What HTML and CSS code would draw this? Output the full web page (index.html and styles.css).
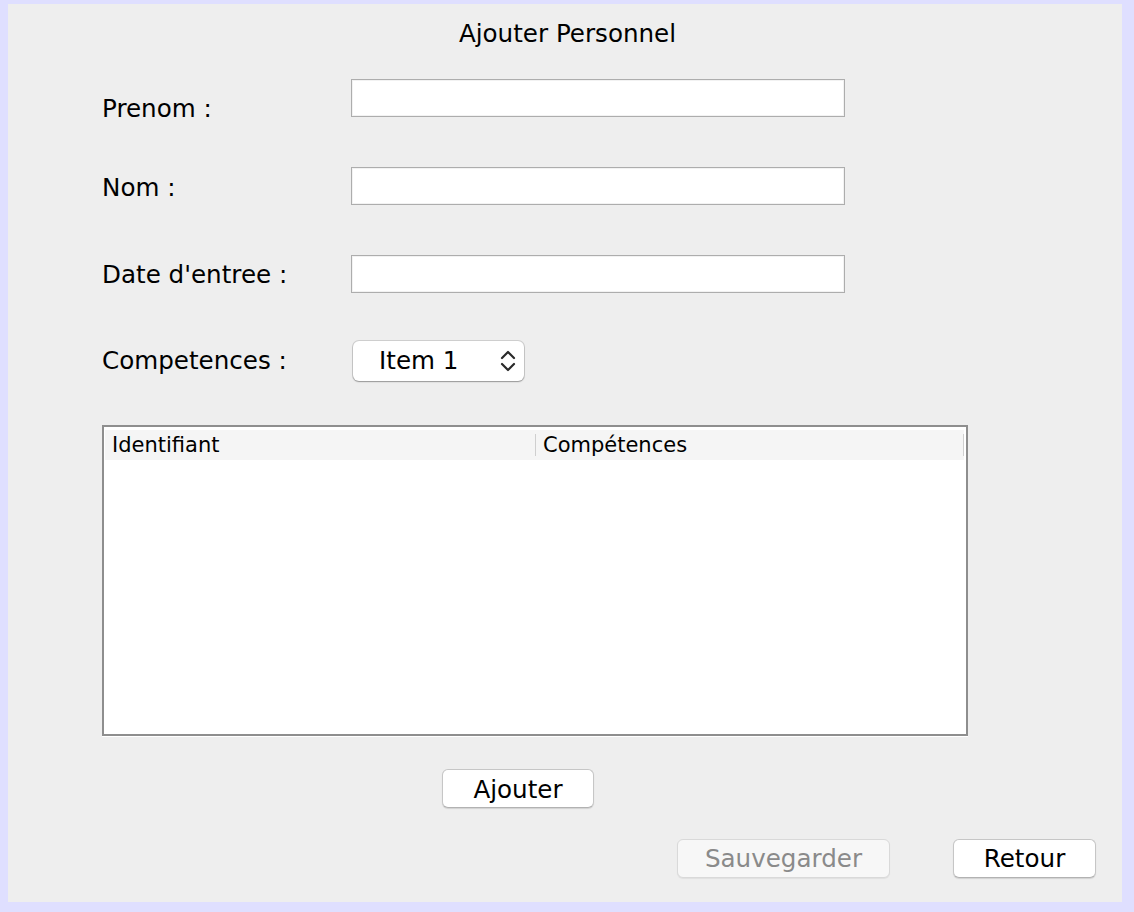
FILE: index.html
```html
<!DOCTYPE html>
<html lang="fr">
<head>
<meta charset="utf-8">
<title>Ajouter Personnel</title>
<link rel="stylesheet" href="styles.css">
</head>
<body>
<div class="panel">
  <div class="title">Ajouter Personnel</div>
  <div class="form">
    <div class="row">
      <label class="lbl lbl-prenom">Prenom :</label>
      <input class="field" type="text">
    </div>
    <div class="row">
      <label class="lbl lbl-nom">Nom :</label>
      <input class="field" type="text">
    </div>
    <div class="row">
      <label class="lbl lbl-date">Date d'entree :</label>
      <input class="field" type="text">
    </div>
    <div class="row row-combo">
      <label class="lbl lbl-comp">Competences :</label>
      <div class="combo">
        <span class="combo-text">Item 1</span>
        <svg class="chev" width="16" height="24" viewBox="0 0 16 24">
          <path d="M2 9 L8 3 L14 9" fill="none" stroke="#2a2a2a" stroke-width="2.2" stroke-linecap="round" stroke-linejoin="round"/>
          <path d="M2 15 L8 21 L14 15" fill="none" stroke="#2a2a2a" stroke-width="2.2" stroke-linecap="round" stroke-linejoin="round"/>
        </svg>
      </div>
    </div>
  </div>
  <div class="table">
    <div class="thead">
      <div class="th th-id">Identifiant</div>
      <span class="sep"></span>
      <div class="th th-comp">Compétences</div>
      <span class="sep"></span>
    </div>
    <div class="tbody"></div>
  </div>
  <div class="add-row">
    <button class="btn btn-add">Ajouter</button>
  </div>
  <div class="actions">
    <button class="btn btn-save" disabled>Sauvegarder</button>
    <button class="btn btn-back">Retour</button>
  </div>
</div>
</body>
</html>
```

FILE: styles.css
```css
* { box-sizing: border-box; }

html, body {
  margin: 0;
  padding: 0;
  background: #dfdfff;
}

body {
  width: 1134px;
  height: 912px;
  padding: 4px 12px 10px 8px;
  font-family: "DejaVu Sans", "Liberation Sans", sans-serif;
  font-size: 24.6px;
  color: #000;
}

.panel {
  width: 1114px;
  height: 898px;
  background: #eeeeee;
  padding-top: 15px;
}

.title {
  line-height: 30px;
  text-align: center;
  padding-left: 5px;
}

.form {
  margin-top: 30px;
  padding-left: 94px;
  display: flex;
  flex-direction: column;
  gap: 50px;
}

.row {
  display: flex;
  height: 38px;
}

.row-combo {
  height: 40px;
  margin-top: -2px;
}

.lbl {
  width: 249px;
  line-height: 38px;
  white-space: nowrap;
}

.lbl-prenom { padding-top: 11px; }
.lbl-nom { padding-top: 2px; }
.lbl-date { padding-top: 1px; }
.lbl-comp { line-height: 40px; }

.field {
  width: 494px;
  height: 38px;
  margin: 0;
  border: 1px solid #adadad;
  background: #fff;
  box-shadow: inset 0 0 0 1px #f2f2f2;
  font: inherit;
  outline: none;
}

.combo {
  margin-left: 2px;
  width: 171px;
  height: 40px;
  background: #fff;
  border-radius: 6px;
  box-shadow: 0 0 0 1px rgba(0, 0, 0, 0.13), 0 1px 1.5px rgba(0, 0, 0, 0.28);
  display: flex;
  align-items: center;
  padding-left: 26px;
  padding-right: 8px;
}

.combo-text {
  flex: 1;
  line-height: 40px;
}

.chev {
  display: block;
  margin-top: 0;
}

.table {
  margin-top: 44px;
  margin-left: 94px;
  width: 866px;
  height: 311px;
  border: 2px solid #8e8e8e;
  background: #fff;
  box-shadow: 0 1px 0 #ffffff;
  padding: 3px 2px 0 1px;
}

.thead {
  display: flex;
  align-items: center;
  height: 30px;
  background: #f5f5f5;
  font-size: 21px;
  line-height: 30px;
}

.th {
  white-space: nowrap;
}

.th-id {
  width: 430px;
  padding-left: 7px;
}

.th-comp {
  width: 427px;
  padding-left: 7px;
}

.sep {
  width: 1px;
  height: 22px;
  background: #cfcfcf;
}

.tbody {
  height: 0;
}

.add-row {
  margin-top: 33px;
  padding-left: 434px;
  display: flex;
}

.btn {
  height: 39px;
  border: 1px solid #c6c6c6;
  border-bottom-color: #b2b2b2;
  border-radius: 6px;
  background: #fff;
  box-shadow: 0 1px 1px rgba(0, 0, 0, 0.12);
  font: inherit;
  color: #000;
  line-height: 37px;
  padding: 0;
  text-align: center;
}

.btn-add {
  width: 152px;
  padding-top: 2px;
  line-height: 35px;
}

.actions {
  margin-top: 31px;
  display: flex;
  justify-content: flex-end;
  gap: 63px;
  padding-right: 26px;
}

.btn-save {
  width: 213px;
  background: #f7f7f7;
  border-color: #d9d9d9;
  color: #8a8a8a;
  box-shadow: 0 1px 1px rgba(0, 0, 0, 0.06);
}

.btn-back { width: 143px; }
```
